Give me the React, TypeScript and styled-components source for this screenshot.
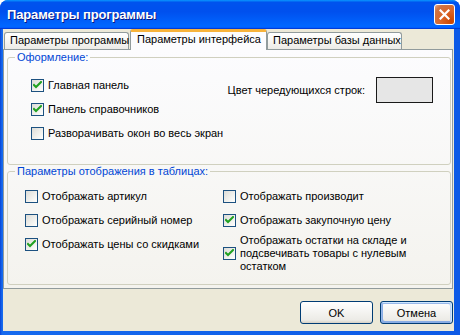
import React from "react";
import styled, { createGlobalStyle } from "styled-components";

const Global = createGlobalStyle`
  html, body { margin: 0; padding: 0; background: #ffffff; }
  body { font-family: "Liberation Sans", Arial, sans-serif; font-size: 11px; color: #000; }
  * { box-sizing: border-box; }
`;

const Window = styled.div`
  width: 460px;
  height: 335px;
  display: flex;
  flex-direction: column;
  background: linear-gradient(90deg, #0843d6 0px, #166aee 2px, #0d5ae6 100%);
  border-radius: 8px 8px 0 0;
  overflow: hidden;
`;

const TitleBar = styled.div`
  height: 29px;
  flex: none;
  display: flex;
  align-items: center;
  justify-content: space-between;
  padding: 0 5px 0 7px;
  background: linear-gradient(180deg, #0997ff, #0053ee 8%, #0050ee 40%, #06f 88%, #06f 93%, #005bff 95%, #003dd7 96%, #003dd7);
`;

const Title = styled.span`
  font-family: "Liberation Sans", Arial, sans-serif;
  font-weight: bold;
  font-size: 13px;
  color: #ffffff;
  text-shadow: 1px 1px 0 #0a1883;
  letter-spacing: -0.15px;
`;

const CloseButton = styled.div`
  width: 21px;
  height: 21px;
  border: 1px solid #ffffff;
  border-radius: 3px;
  background: radial-gradient(circle at 85% 85%, #cc4600 0%, #dc6527 45%, #cd7546 80%, #e5a58a 100%);
  display: flex;
  align-items: center;
  justify-content: center;
`;

const Body = styled.div`
  flex: 1;
  margin: 0 6px 4px 3px;
  background: #ece9d8;
  display: flex;
  flex-direction: column;
`;

const TabRow = styled.div`
  height: 20px;
  flex: none;
  display: flex;
  align-items: flex-end;
  padding-left: 1px;
  position: relative;
  z-index: 1;
`;

const Tab = styled.div<{ $w: number; $active?: boolean }>`
  width: ${(p) => p.$w}px;
  height: ${(p) => (p.$active ? 21 : 17)}px;
  margin-bottom: ${(p) => (p.$active ? -1 : 0)}px;
  margin-left: ${(p) => (p.$active ? 1 : 0)}px;
  border: 1px solid #919b9c;
  border-bottom: none;
  border-radius: 3px 3px 0 0;
  border-top: ${(p) => (p.$active ? "3px solid #f7b33b" : "1px solid #919b9c")};
  background: ${(p) =>
    p.$active ? "#fcfcfe" : "linear-gradient(180deg, #ffffff 0%, #f7f7f4 50%, #ecebe6 100%)"};
  padding-left: ${(p) => (p.$active ? 6 : 5)}px;
  line-height: 15px;
  white-space: nowrap;
  font-size: 11px;
`;

const Panel = styled.div`
  height: 240px;
  flex: none;
  margin-right: 1px;
  border: 1px solid #919b9c;
  background: linear-gradient(180deg, #fcfcfe 0%, #f4f3ee 100%);
  padding: 1px 1px 2px 3px;
  display: flex;
  flex-direction: column;
`;

const Group = styled.fieldset<{ $pt: number; $pb: number }>`
  margin: 0;
  padding: ${(p) => p.$pt}px 0 ${(p) => p.$pb}px 0;
  border: 1px solid #d0d0bf;
  border-radius: 3px;
  min-inline-size: 0;
`;

const Legend = styled.legend`
  color: #0046d5;
  padding: 0 2px;
  margin-left: 7px;
  line-height: 13px;
  font-size: 11px;
`;

const StyleGrid = styled.div`
  display: grid;
  grid-template-columns: 1fr auto;
  align-items: start;
  padding: 0 17px 0 23px;
`;

const CheckColumn = styled.div<{ $gap: number; $pt?: number }>`
  display: flex;
  flex-direction: column;
  gap: ${(p) => p.$gap}px;
  padding-top: ${(p) => p.$pt ?? 0}px;
`;

const ColorRow = styled.div`
  display: flex;
  align-items: center;
  gap: 11px;
`;

const ColorSwatch = styled.div`
  width: 57px;
  height: 26px;
  border: 1px solid #1a1a1a;
  background: #e6e6e6;
`;

const TableGrid = styled.div`
  display: grid;
  grid-template-columns: 198px 1fr;
  padding: 0 0 0 17px;
`;

const Row = styled.label<{ $shift?: number }>`
  display: flex;
  align-items: center;
  gap: 4px;
  line-height: 13px;
  margin-top: ${(p) => p.$shift ?? 0}px;
`;

const Box = styled.span`
  width: 13px;
  height: 13px;
  flex: none;
  border: 1px solid #1c5180;
  background: linear-gradient(135deg, #dcdcd7 0%, #f5f5f2 70%, #ffffff 100%);
  display: flex;
  align-items: center;
  justify-content: center;
`;

const Footer = styled.div`
  display: flex;
  justify-content: flex-end;
  gap: 7px;
  padding: 12px 1px 0 0;
`;

const Button = styled.button<{ $default?: boolean }>`
  width: 73px;
  height: 23px;
  border: 1px solid #003c74;
  border-radius: 3px;
  background: linear-gradient(180deg, #ffffff 0%, #ecebe6 86%, #d6d0c5 100%);
  font-family: "Liberation Sans", Arial, sans-serif;
  font-size: 11px;
  color: #000;
  padding: 0;
  box-shadow: ${(p) =>
    p.$default
      ? "inset -1px 1px #cee7ff, inset 1px 2px #98b8ea, inset -2px 2px #bcd4f6, inset 1px -1px #89ade4, inset 2px -2px #89ade4"
      : "none"};
`;

const CheckMark = () => (
  <svg width="9" height="9" viewBox="0 0 9 9">
    <path d="M1 4 L3 6 L8 1" fill="none" stroke="#21a121" strokeWidth="2" strokeLinecap="square" />
  </svg>
);

const Check = ({ checked, children, shift }: { checked?: boolean; children: React.ReactNode; shift?: number }) => (
  <Row $shift={shift}>
    <Box>{checked && <CheckMark />}</Box>
    <span>{children}</span>
  </Row>
);

export default function App() {
  return (
    <>
      <Global />
      <Window>
        <TitleBar>
          <Title>Параметры программы</Title>
          <CloseButton>
            <svg width="11" height="11" viewBox="0 0 11 11">
              <path d="M1.5 1.5 L9.5 9.5 M9.5 1.5 L1.5 9.5" stroke="#ffffff" strokeWidth="2.2" strokeLinecap="square" />
            </svg>
          </CloseButton>
        </TitleBar>
        <Body>
          <TabRow>
            <Tab $w={125}>Параметры программы</Tab>
            <Tab $w={137} $active>
              Параметры интерфейса
            </Tab>
            <Tab $w={135}>Параметры базы данных</Tab>
          </TabRow>
          <Panel>
            <Group $pt={13} $pb={24}>
              <Legend>Оформление:</Legend>
              <StyleGrid>
                <CheckColumn $gap={11} $pt={2}>
                  <Check checked>Главная панель</Check>
                  <Check checked>Панель справочников</Check>
                  <Check>Разворачивать окон во весь экран</Check>
                </CheckColumn>
                <ColorRow>
                  <span>Цвет чередующихся строк:</span>
                  <ColorSwatch />
                </ColorRow>
              </StyleGrid>
            </Group>
            <Group $pt={12} $pb={11}>
              <Legend>Параметры отображения в таблицах:</Legend>
              <TableGrid>
                <CheckColumn $gap={11}>
                  <Check>Отображать артикул</Check>
                  <Check>Отображать серийный номер</Check>
                  <Check checked>Отображать цены со скидками</Check>
                </CheckColumn>
                <CheckColumn $gap={11}>
                  <Check>Отображать производит</Check>
                  <Check checked>Отображать закупочную цену</Check>
                  <Check checked shift={-4}>
                    Отображать остатки на складе и
                    <br />
                    подсвечивать товары с нулевым
                    <br />
                    остатком
                  </Check>
                </CheckColumn>
              </TableGrid>
            </Group>
          </Panel>
          <Footer>
            <Button>OK</Button>
            <Button $default>Отмена</Button>
          </Footer>
        </Body>
      </Window>
    </>
  );
}
